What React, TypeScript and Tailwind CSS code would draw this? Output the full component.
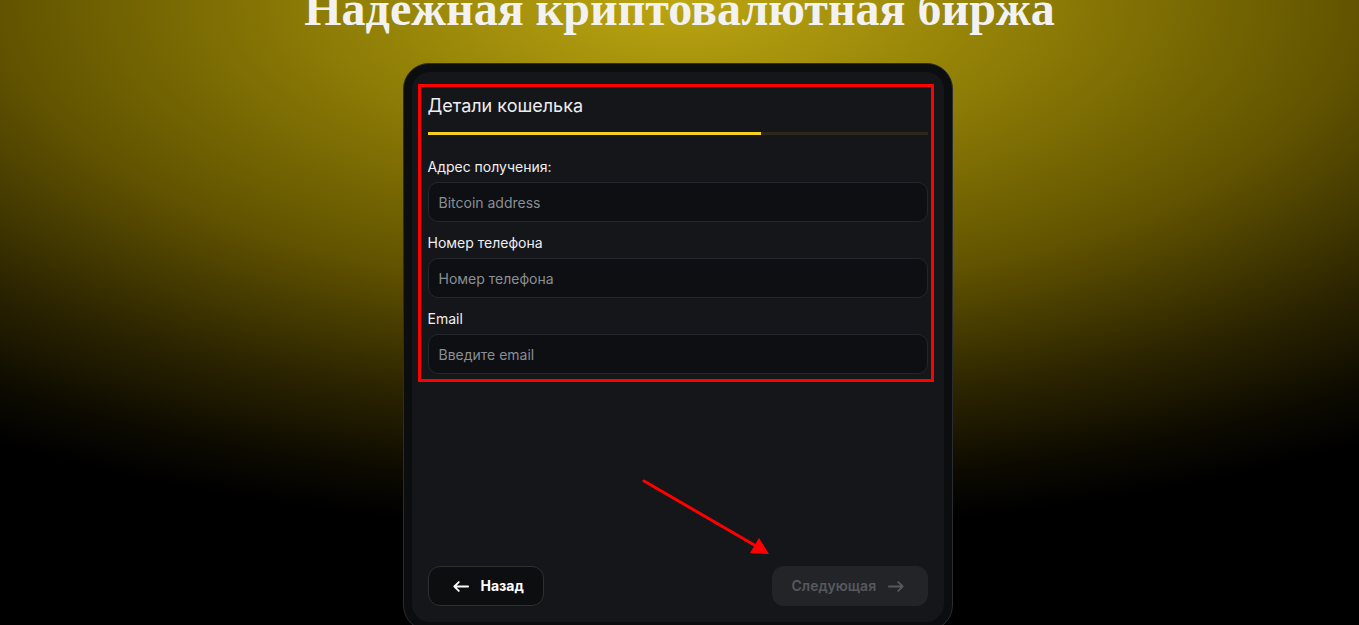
import React from 'react';

const Arrow: React.FC<{ dir: 'left' | 'right'; className?: string }> = ({ dir, className }) => (
  <svg viewBox="0 0 18 12" className={className} fill="none" stroke="currentColor" strokeWidth={2} strokeLinecap="round" strokeLinejoin="round">
    {dir === 'left' ? (
      <path d="M17 6H1.5M6.5 1 1.5 6l5 5" />
    ) : (
      <path d="M1 6h15.5M11.5 1l5 5-5 5" />
    )}
  </svg>
);

const Field: React.FC<{ label: string; placeholder: string }> = ({ label, placeholder }) => (
  <div className="flex flex-col">
    <label className="text-sm leading-5 font-normal text-[#eeeff1]">{label}</label>
    <input
      placeholder={placeholder}
      className="mt-[5px] h-10 w-full rounded-[10px] border border-[#23262d] bg-[#0e0f12] px-[10px] text-sm text-white outline-none placeholder:text-[#8a8e96]"
    />
  </div>
);

export default function App() {
  return (
    <div
      className="relative min-h-[625px] w-full overflow-hidden bg-black bg-[radial-gradient(ellipse_1300px_560px_at_50%_0%,#bca612_0%,#8d7c06_28%,#625400_52%,#2e2600_72%,#0c0a00_87%,#000_95%)]"
      style={{ fontFamily: 'Inter, "Noto Sans", sans-serif' }}
    >
      <h1
        className="mt-[-15px] text-center text-[48px] leading-none font-bold text-[#f2f2f2]"
        style={{ fontFamily: '"Liberation Serif", "DejaVu Serif", serif' }}
      >
        Надежная криптовалютная биржа
      </h1>

      <div className="mx-auto mt-[30px] w-[550px] -translate-x-[2px] rounded-[26px] border border-[#2a2c30] bg-[#0c0d0f] p-2">
        <div className="flex h-[550px] flex-col rounded-[18px] bg-[#15161a] px-4 pt-5 pb-4">
          <h2 className="text-lg leading-7 text-[#eceef0]">Детали кошелька</h2>
          <div className="mt-3 h-[3px] w-full bg-[#2b2819]">
            <div className="h-full w-2/3 bg-[#f5d11d]" />
          </div>

          <div className="mt-[22px] flex flex-col gap-[11px]">
            <Field label="Адрес получения:" placeholder="Bitcoin address" />
            <Field label="Номер телефона" placeholder="Номер телефона" />
            <Field label="Email" placeholder="Введите email" />
          </div>

          <div className="mt-auto flex items-center justify-between">
            <button className="flex h-10 w-[116px] items-center gap-3 rounded-xl border border-[#2b2f36] bg-[#0d0e10] pl-6 text-sm font-bold text-white">
              <Arrow dir="left" className="h-[11px] w-4" />
              Назад
            </button>
            <button
              disabled
              className="flex h-10 w-[156px] items-center gap-3 rounded-xl bg-[#232427] pl-5 text-sm font-semibold text-[#56585e]"
            >
              Следующая
              <Arrow dir="right" className="h-[11px] w-4" />
            </button>
          </div>
        </div>
      </div>

      {/* annotation overlay */}
      <div className="pointer-events-none absolute top-[84px] left-[418px] h-[298px] w-[516px] border-[3px] border-[#ff0000]" />
      <svg className="pointer-events-none absolute top-0 left-0" width="1359" height="625">
        <line x1="644" y1="481" x2="756" y2="546" stroke="#ff0000" strokeWidth="3" strokeLinecap="round" />
        <polygon points="769,554 750,553 759,538" fill="#ff0000" />
      </svg>
    </div>
  );
}
